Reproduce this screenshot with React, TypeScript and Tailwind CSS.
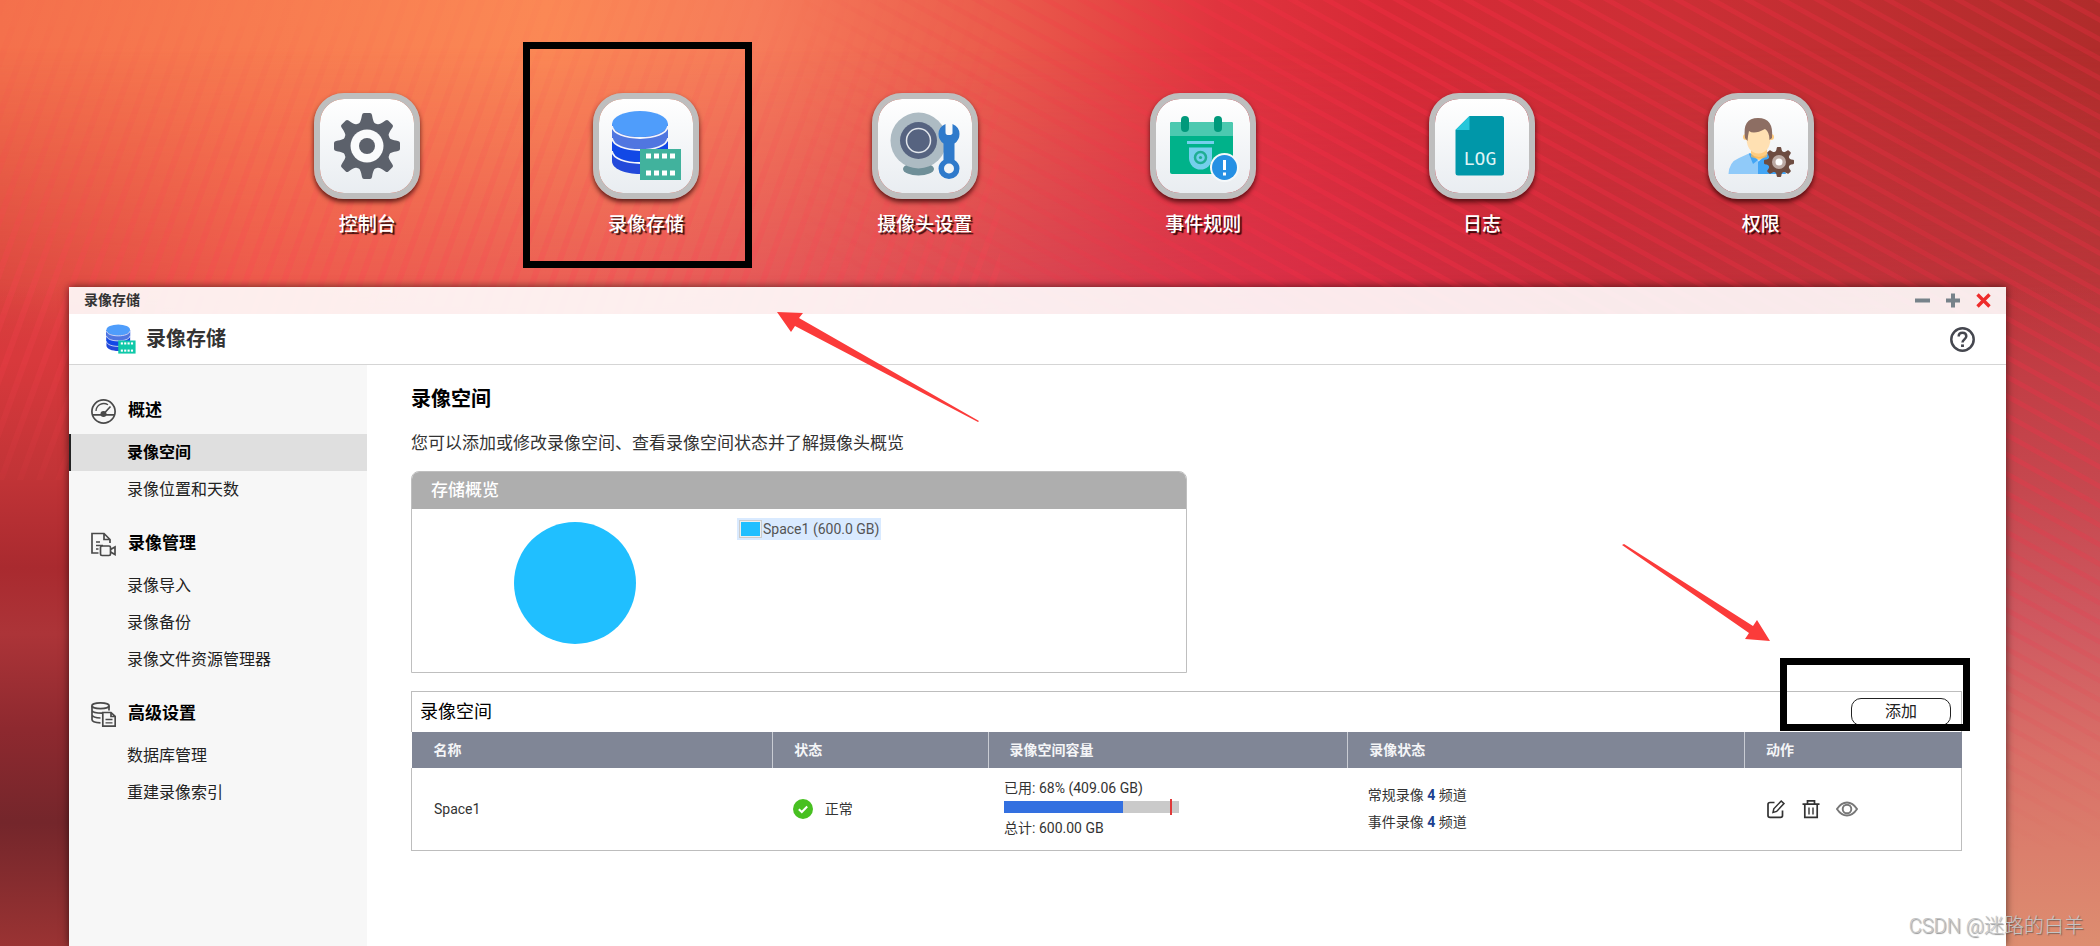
import type { ReactNode } from "react";

const GEAR_ANGLES = [0, 45, 90, 135, 180, 225, 270, 315];

function Gear({ cx, cy, r, fill }: { cx: number; cy: number; r: number; fill: string }) {
  return (
    <g transform={`translate(${cx} ${cy}) scale(${r / 33})`} fill={fill}>
      <circle r="24" />
      {GEAR_ANGLES.map((a) => (
        <path key={a} transform={`rotate(${a})`} d="M-10 -20 C-7 -23 -6 -25 -5 -31 Q-4.600 -33 -3 -33 H3 Q4.600 -33 5 -31 C6 -25 7 -23 10 -20 Z" />
      ))}
    </g>
  );
}

function StorageArt({ film }: { film: string }) {
  return (
    <g>
      <path d="M19 31 V68 C19 76 32 81 47 81 S75 76 75 68 V31 Z" fill="#2349da" />
      <path d="M19 31 V56 C19 64 32 69 47 69 S75 64 75 56 V31 Z" fill="#1248e6" />
      <path d="M19 31 V44 C19 52 32 57 47 57 S75 52 75 44 V31 Z" fill="#5076e0" />
      <ellipse cx="47" cy="31" rx="28" ry="13" fill="#4f9dfb" />
      <g fill="none" stroke="#f3f5fb" strokeWidth="1.800">
        <path d="M19 33 C20 41 33 45 47 45 S74 41 75 33" />
        <path d="M19 45 C20 53 33 57 47 57 S74 53 75 45" />
        <path d="M19 58 C20 66 33 70 47 70 S74 66 75 58" />
      </g>
      <rect x="47" y="56" width="41" height="31" fill={film} />
      {[53, 61, 69, 77].map((x) => (
        <g key={x} fill="#fff">
          <rect x={x} y="60.500" width="5" height="5" />
          <rect x={x} y="77.500" width="5" height="5" />
        </g>
      ))}
    </g>
  );
}

function ControlArt() {
  return (
    <g>
      <Gear cx={53} cy={53} r={33} fill="#5c616b" />
      <circle cx="53" cy="53" r="16.500" fill="#fafbfc" />
      <circle cx="53" cy="53" r="8" fill="#5c616b" />
    </g>
  );
}

function CameraArt() {
  return (
    <g>
      <ellipse cx="46.500" cy="76" rx="15.500" ry="6.500" fill="#6f8f98" />
      <circle cx="46.500" cy="47.500" r="28" fill="#adbbc3" />
      <circle cx="46.500" cy="47.500" r="18.500" fill="#566380" />
      <circle cx="46.500" cy="47.500" r="12" fill="none" stroke="#e3e7ec" strokeWidth="1.500" />
      <path
        fill="#2f7acb"
        d="M73.500 31 V40 Q73.500 42 77 42 Q80.500 42 80.500 40 V31 Q87.500 34 87.500 41 Q87.500 47 82.500 50.500 V67 Q87.500 70 87.500 75.500 A10.500 10.500 0 0 1 66.500 75.500 Q66.500 70 71.500 67 V50.500 Q66.500 47 66.500 41 Q66.500 34 73.500 31 Z"
      />
      <circle cx="77" cy="75.500" r="5" fill="#f1f4f7" />
    </g>
  );
}

function EventArt() {
  return (
    <g>
      <rect x="20" y="29" width="63" height="52" rx="2" fill="#00b28a" />
      <path d="M20 43 V31 Q20 29 22 29 H81 Q83 29 83 31 V43 Z" fill="#4cc9b0" />
      <rect x="31" y="23" width="8" height="16" rx="4" fill="#00997b" />
      <rect x="64" y="23" width="8" height="16" rx="4" fill="#00997b" />
      <rect x="37" y="48" width="27" height="3" fill="#74cfec" />
      <path d="M39 54.500 H62 V65 A11.500 11.500 0 0 1 39 65 Z" fill="#74cfec" />
      <circle cx="50.500" cy="64.500" r="5.500" fill="none" stroke="#1fae94" strokeWidth="2.500" />
      <circle cx="50.500" cy="64.500" r="1.600" fill="#1fae94" />
      <circle cx="74.500" cy="74.500" r="14.500" fill="#f5f8fa" />
      <circle cx="74.500" cy="74.500" r="12.500" fill="#2590e4" />
      <rect x="73" y="67" width="3" height="10" fill="#fff" />
      <rect x="73" y="79.500" width="3" height="3" fill="#fff" />
    </g>
  );
}

function LogArt() {
  return (
    <g>
      <path d="M40.500 23 H72.500 Q75 23 75 25.500 V80 Q75 82.500 72.500 82.500 H29 Q26.500 82.500 26.500 80 V37 Z" fill="#0097a9" />
      <path d="M40.500 23 V37 H26.500 Z" fill="#26c6da" />
      <text x="51" y="72" textAnchor="middle" fill="#dff4f6" fontSize="18" fontFamily="'DejaVu Sans Mono', monospace">
        LOG
      </text>
    </g>
  );
}

function UserArt() {
  return (
    <g>
      <path d="M43 56 H59 V64 Q51 70 43 64 Z" fill="#ffcc80" />
      <path d="M20.500 81 Q21 69 31 65 L42 60 L51 68 L60 60 Q72 64 76 70 V81 Z" fill="#90caf9" />
      <path d="M50 69 L60 61 Q68 63 72 66 L78 81 H50 Z" fill="#42a5f5" />
      <path d="M42 60 L50 67 L45 71 L41 61 Z" fill="#42a5f5" />
      <path d="M43 61 Q51 67 59 61 V64 Q51 67 43 64 Z" fill="#ffb74d" opacity=".7" />
      <circle cx="38" cy="44" r="3" fill="#ffcc80" />
      <circle cx="63" cy="44" r="3" fill="#ffcc80" />
      <path d="M38.500 36 Q38.500 28 50.500 28 T62.500 36 V45 Q62 60 50.500 60.500 Q39 60 38.500 45 Z" fill="#ffe0b2" />
      <path d="M37 45 Q34 25 50 25 Q66 25 64 45 L61.500 47 Q61.500 39 57 36 Q46 42 41 38 Q40 42 39.500 48 Z" fill="#8d6e63" />
      <Gear cx={71} cy={69} r={15} fill="#6d4c41" />
      <circle cx="71" cy="69" r="7" fill="#bcaaa4" />
      <circle cx="71" cy="69" r="3.500" fill="#fff" />
    </g>
  );
}

const SHORTCUTS: { label: string; art: ReactNode; marked?: boolean }[] = [
  { label: "控制台", art: <ControlArt /> },
  { label: "录像存储", art: <StorageArt film="#41b29d" />, marked: true },
  { label: "摄像头设置", art: <CameraArt /> },
  { label: "事件规则", art: <EventArt /> },
  { label: "日志", art: <LogArt /> },
  { label: "权限", art: <UserArt /> },
];

function Wallpaper() {
  return (
    <svg className="absolute inset-0 h-full w-full" viewBox="0 0 2100 946" preserveAspectRatio="none" aria-hidden="true">
      <defs>
        <linearGradient id="base" x1="0" y1="0" x2="1" y2="0">
          <stop offset="0" stopColor="#f4704c" />
          <stop offset=".26" stopColor="#fb8855" />
          <stop offset=".36" stopColor="#f67c5a" />
          <stop offset=".48" stopColor="#ea5a4b" />
          <stop offset=".58" stopColor="#e0343e" />
          <stop offset=".66" stopColor="#d62a36" />
          <stop offset=".8" stopColor="#cb2f35" />
          <stop offset="1" stopColor="#b02c2b" />
        </linearGradient>
        <linearGradient id="low" x1="0" y1="0" x2="1" y2="0">
          <stop offset="0" stopColor="#d2383b" />
          <stop offset=".12" stopColor="#e94c4a" />
          <stop offset=".3" stopColor="#e35058" />
          <stop offset=".5" stopColor="#d33e54" />
          <stop offset=".62" stopColor="#d82e4a" />
          <stop offset=".76" stopColor="#c12c3a" />
          <stop offset="1" stopColor="#bd3a40" />
        </linearGradient>
        <linearGradient id="fadeDown" x1="0" y1="0" x2="0" y2="1">
          <stop offset=".05" stopColor="#fff" stopOpacity="0" />
          <stop offset=".4" stopColor="#fff" stopOpacity="1" />
        </linearGradient>
        <mask id="lowMask">
          <rect width="2100" height="946" fill="url(#fadeDown)" />
        </mask>
        <linearGradient id="leftEdge" x1="0" y1="0" x2="0" y2="1">
          <stop offset=".3" stopColor="#d8393c" stopOpacity="0" />
          <stop offset=".38" stopColor="#d8393c" />
          <stop offset=".5" stopColor="#c23437" />
          <stop offset=".6" stopColor="#a92a2f" />
          <stop offset=".67" stopColor="#ac3438" />
          <stop offset=".77" stopColor="#8e292f" />
          <stop offset=".87" stopColor="#74262b" />
          <stop offset="1" stopColor="#9a3333" />
        </linearGradient>
        <linearGradient id="rightEdge" x1="0" y1="0" x2="0" y2="1">
          <stop offset=".3" stopColor="#bf3a40" stopOpacity="0" />
          <stop offset=".4" stopColor="#c23e45" />
          <stop offset=".52" stopColor="#c6484f" />
          <stop offset=".66" stopColor="#cf5960" />
          <stop offset=".8" stopColor="#d97068" />
          <stop offset="1" stopColor="#dd8d70" />
        </linearGradient>
        <pattern id="steep" width="18" height="18" patternUnits="userSpaceOnUse" patternTransform="rotate(20)">
          <rect width="6" height="18" fill="#ff4452" opacity=".24" />
        </pattern>
        <pattern id="slant" width="20" height="17" patternUnits="userSpaceOnUse" patternTransform="rotate(29)">
          <rect width="20" height="5" fill="#ff3048" opacity=".3" />
        </pattern>
        <linearGradient id="steepFade" x1="0" y1="0" x2="0" y2="1">
          <stop offset=".05" stopColor="#fff" stopOpacity=".1" />
          <stop offset=".6" stopColor="#fff" stopOpacity="1" />
          <stop offset="1" stopColor="#fff" stopOpacity=".3" />
        </linearGradient>
        <linearGradient id="slantFade" x1="0" y1="0" x2="1" y2="0">
          <stop offset=".4" stopColor="#fff" stopOpacity="0" />
          <stop offset=".55" stopColor="#fff" stopOpacity=".5" />
          <stop offset=".7" stopColor="#fff" stopOpacity="1" />
          <stop offset="1" stopColor="#fff" stopOpacity=".7" />
        </linearGradient>
        <linearGradient id="slantDown" x1="0" y1="0" x2="0" y2="1">
          <stop offset=".5" stopColor="#fff" stopOpacity=".8" />
          <stop offset=".9" stopColor="#fff" stopOpacity="0" />
        </linearGradient>
        <mask id="steepMask">
          <rect width="1000" height="480" fill="url(#steepFade)" />
        </mask>
        <mask id="slantMask">
          <rect width="2000" height="946" fill="url(#slantFade)" />
          <rect x="2000" width="100" height="946" fill="url(#slantDown)" />
        </mask>
      </defs>
      <rect width="2100" height="946" fill="url(#base)" />
      <rect width="2100" height="946" fill="url(#low)" mask="url(#lowMask)" />
      <rect width="80" height="946" fill="url(#leftEdge)" />
      <rect x="2000" width="100" height="946" fill="url(#rightEdge)" />
      <rect width="1000" height="946" fill="url(#steep)" mask="url(#steepMask)" />
      <rect width="2100" height="946" fill="url(#slant)" mask="url(#slantMask)" />
    </svg>
  );
}

const iconStroke = { fill: "none", stroke: "#4a4a4a", strokeWidth: 1.7 } as const;

function GaugeIcon() {
  return (
    <svg className="h-[25px] w-[25px]" viewBox="0 0 25 25" {...iconStroke} aria-hidden="true">
      <circle cx="12.500" cy="12.500" r="11.600" />
      <path d="M1.500 15.800 H10 M15 15.800 H23.500 M13 14.500 L19.500 7.500" />
      <path d="M5 12 A7.800 7.800 0 0 1 17 5.800" strokeWidth="1.300" />
      <circle cx="12.500" cy="15" r="2.200" fill="#4a4a4a" />
    </svg>
  );
}

function RecordFileIcon() {
  return (
    <svg className="h-[25px] w-[25px]" viewBox="0 0 25 25" {...iconStroke} aria-hidden="true">
      <path d="M7.500 21 H1 V1.500 H13 L19 7.500 V11 M13 1.500 V7.500 H19" />
      <path d="M5 10 H9 M5 13.500 H12 M5 17 H7.500" strokeWidth="1.400" />
      <rect x="9.500" y="14" width="10" height="9.500" rx="1.500" />
      <path d="M19.500 17.500 L24 15 V22.500 L19.500 20" />
    </svg>
  );
}

function DatabaseFileIcon() {
  return (
    <svg className="h-[25px] w-[25px]" viewBox="0 0 25 25" {...iconStroke} aria-hidden="true">
      <ellipse cx="9.500" cy="3.800" rx="8.600" ry="2.900" />
      <path d="M1 4 V17.500 Q1 20.500 9.500 20.800 M18 4 V8.500 M1 8.500 Q2 11.200 11 11.200 M1 13 Q2 15.800 9.500 16" />
      <path d="M11.800 10.500 H20 L24.200 14.500 V24.200 H11.800 Z M20 10.500 V14.500 H24" />
      <path d="M14.500 17.500 H21.500 M14.500 20.800 H21.500" strokeWidth="1.300" />
    </svg>
  );
}

const MENU: { title: string; icon: ReactNode; items: string[] }[] = [
  { title: "概述", icon: <GaugeIcon />, items: ["录像空间", "录像位置和天数"] },
  { title: "录像管理", icon: <RecordFileIcon />, items: ["录像导入", "录像备份", "录像文件资源管理器"] },
  { title: "高级设置", icon: <DatabaseFileIcon />, items: ["数据库管理", "重建录像索引"] },
];

function Sidebar() {
  return (
    <nav className="w-[298px] shrink-0 bg-[#f7f7f7] pt-[23px]" aria-label="录像存储">
      {MENU.map((group, g) => (
        <section key={group.title} className="mb-[13px]">
          <h2 className="flex h-[46px] items-center gap-3 pl-[22px] text-[17px] font-bold text-black">
            {group.icon}
            {group.title}
          </h2>
          <ul>
            {group.items.map((item, i) => {
              const active = g === 0 && i === 0;
              return (
                <li key={item}>
                  <a
                    href="#"
                    aria-current={active ? "page" : undefined}
                    className={
                      active
                        ? "flex h-[37px] items-center border-l-2 border-[#222] bg-[#dfdfdf] pl-14 text-base font-bold text-black"
                        : "flex h-[37px] items-center pl-[58px] text-base text-[#222]"
                    }
                  >
                    {item}
                  </a>
                </li>
              );
            })}
          </ul>
        </section>
      ))}
    </nav>
  );
}

function Overview() {
  return (
    <section className="mt-4 h-[202px] w-1/2 overflow-hidden rounded-t-lg border border-[#bfbfbf]">
      <h2 className="flex h-[37px] items-center bg-[#aeaeae] pl-[19px] text-[17px] font-medium text-white">存储概览</h2>
      <div className="flex items-start gap-[101px] pl-[102px]">
        <svg className="mt-[13px] h-[122px] w-[122px]" viewBox="0 0 122 122" role="img" aria-label="Space1">
          <circle cx="61" cy="61" r="61" fill="#20bfff" />
        </svg>
        <div className="mt-[9px] flex h-[22px] items-center gap-px bg-[#d9eaff] px-[2px] text-sm text-[#545454]">
          <span className="h-[18px] w-[23px] border border-[#ccc] bg-[#20bfff] p-px outline-1 -outline-offset-2 outline-[#eee]" />
          <span>Space1 (600.0 GB)</span>
        </div>
      </div>
    </section>
  );
}

function SpaceTable() {
  const th = "border-l border-[#c9ccd3] pl-[21px] text-left font-bold";
  return (
    <section className="mt-[18px]">
      <div className="relative flex h-[41px] items-center justify-between border border-b-0 border-[#bdbdbd] pr-[10px] pb-px pl-2">
        <h2 className="text-lg text-black">录像空间</h2>
        <button type="button" className="h-[28px] w-[100px] rounded-[10px] border border-[#222] bg-white text-base text-[#222]">
          添加
        </button>
        <span className="pointer-events-none absolute -top-[34px] -right-[9px] h-[73px] w-[190px] border-[7px] border-black" aria-hidden="true" />
      </div>
      <table className="w-full table-fixed border-collapse text-sm text-[#333]">
        <colgroup>
          <col className="w-[23.3%]" />
          <col className="w-[13.9%]" />
          <col className="w-[23.2%]" />
          <col className="w-[25.6%]" />
          <col />
        </colgroup>
        <thead>
          <tr className="h-9 bg-[#808696] text-[#f4f5f7]">
            <th className="pl-[22px] text-left font-bold">名称</th>
            <th className={th}>状态</th>
            <th className={th}>录像空间容量</th>
            <th className={th}>录像状态</th>
            <th className={th}>动作</th>
          </tr>
        </thead>
        <tbody>
          <tr className="h-[82px] border border-t-0 border-[#bdbdbd]">
            <td className="pl-[22px]">Space1</td>
            <td className="pl-5">
              <div className="flex items-center gap-3">
                <svg className="h-5 w-5" viewBox="0 0 20 20" aria-hidden="true">
                  <circle cx="10" cy="10" r="10" fill="#48c021" />
                  <path d="M5.800 10.200 L8.800 13 L14.200 7.500" fill="none" stroke="#fff" strokeWidth="2" />
                </svg>
                正常
              </div>
            </td>
            <td className="pl-4">
              <div className="flex h-[26px] items-center">已用: 68% (409.06 GB)</div>
              <div className="relative h-3 w-[175px] bg-[#cacaca]" role="meter" aria-valuenow={68} aria-label="录像空间容量">
                <div className="h-full bg-[#3370e0]" style={{ width: "68%" }} />
                <span className="absolute -top-[2px] right-[7px] h-4 w-[2px] bg-[#e03a3a]" />
              </div>
              <div className="flex h-[30px] items-center">总计: 600.00 GB</div>
            </td>
            <td className="pl-5">
              <p className="leading-[27px]">
                常规录像 <b className="text-[#1c3f8f]">4</b> 频道
              </p>
              <p className="leading-[27px]">
                事件录像 <b className="text-[#1c3f8f]">4</b> 频道
              </p>
            </td>
            <td className="pl-[22px]">
              <div className="flex items-center gap-4">
                <button type="button" aria-label="编辑">
                  <svg className="h-5 w-5" viewBox="0 0 20 20" fill="none" stroke="#333" strokeWidth="1.700" aria-hidden="true">
                    <path d="M8.500 3.500 H4 Q2 3.500 2 5.500 V16.500 Q2 18.300 4 18.300 H14.500 Q16.500 18.300 16.500 16.500 V11.500" />
                    <path d="M7 13.500 L7.800 9.800 L15.200 2 L18 4.600 L10.600 12.400 Z" strokeWidth="1.500" />
                  </svg>
                </button>
                <button type="button" aria-label="删除">
                  <svg className="h-5 w-[18px]" viewBox="0 0 18 20" fill="none" stroke="#333" strokeWidth="1.700" aria-hidden="true">
                    <path d="M0.500 5.200 H17.500 M5.500 5 V1.800 H12.500 V5 M2.800 5.500 V18.300 H15.200 V5.500" />
                    <path d="M7 8.500 V15.500 M11 8.500 V15.500" strokeWidth="1.400" />
                  </svg>
                </button>
                <button type="button" aria-label="查看">
                  <svg className="h-5 w-[22px]" viewBox="0 0 23 20" fill="none" stroke="#777" strokeWidth="2" aria-hidden="true">
                    <path d="M1 10 Q5.500 3.200 11.500 3.200 T22 10 Q17.500 16.800 11.500 16.800 T1 10 Z" />
                    <circle cx="11.500" cy="10" r="4.500" />
                  </svg>
                </button>
              </div>
            </td>
          </tr>
        </tbody>
      </table>
    </section>
  );
}

function TitleBar() {
  return (
    <div className="flex h-[27px] items-center justify-between bg-white/90 pr-[15px] pb-px pl-[15px]">
      <span className="text-sm font-bold text-[#333]">录像存储</span>
      <div className="flex gap-4">
        <button type="button" aria-label="最小化">
          <svg className="h-[15px] w-[15px]" viewBox="0 0 15 15" aria-hidden="true">
            <path d="M0 7.500 H15" stroke="#77828a" strokeWidth="4" />
          </svg>
        </button>
        <button type="button" aria-label="最大化">
          <svg className="h-[15px] w-[14px]" viewBox="0 0 14 15" aria-hidden="true">
            <path d="M0 7.500 H14 M7 0.500 V14.500" stroke="#77828a" strokeWidth="4" />
          </svg>
        </button>
        <button type="button" aria-label="关闭">
          <svg className="h-[15px] w-[15px]" viewBox="0 0 15 15" aria-hidden="true">
            <path d="M1.500 1.500 L13.500 13.500 M13.500 1.500 L1.500 13.500" stroke="#ee2b2b" strokeWidth="3.400" />
          </svg>
        </button>
      </div>
    </div>
  );
}

export default function App() {
  return (
    <div className="relative flex min-h-screen flex-col overflow-hidden font-['Roboto','Noto_Sans_CJK_SC',sans-serif]" lang="zh-CN">
      <Wallpaper />

      <div className="relative grid grid-cols-6 pt-[93px] pr-[200px] pb-12 pl-[228px]">
        {SHORTCUTS.map((s) => (
          <div key={s.label} className="relative flex justify-center">
            <a href="#" className="flex flex-col items-center gap-3">
              <span className="relative h-[106px] w-[106px] rounded-[30px] border-[6px] border-[#bebebe] bg-linear-to-b from-white to-[#e9edf1] bg-clip-padding shadow-[0_3px_5px_rgba(40,0,0,0.75)]">
                <svg className="absolute -inset-[6px] h-[106px] w-[106px]" viewBox="0 0 106 106" aria-hidden="true">
                  {s.art}
                </svg>
              </span>
              <span className="text-[19px] leading-7 font-medium text-white [text-shadow:2px_2px_1px_rgba(30,0,0,0.85)]">{s.label}</span>
            </a>
            {s.marked && <span className="pointer-events-none absolute -top-[51px] left-4 h-[226px] w-[229px] border-[7px] border-black" aria-hidden="true" />}
          </div>
        ))}
      </div>

      <div className="relative mr-[94px] ml-[69px] flex grow flex-col shadow-[0_0_8px_rgba(0,0,0,0.6)]">
        <TitleBar />
        <header className="flex h-[51px] items-center justify-between border-b border-[#d5d5d5] bg-white pr-[31px] pl-[37px]">
          <div className="flex items-center gap-[10px]">
            <svg className="h-[30px] w-[30px]" viewBox="18 17 71 71" aria-hidden="true">
              <StorageArt film="#0fc9a9" />
            </svg>
            <h1 className="text-xl leading-7 font-bold text-[#333]">录像存储</h1>
          </div>
          <button type="button" aria-label="帮助">
            <svg className="h-[25px] w-[25px]" viewBox="0 0 25 25" fill="none" stroke="#45474f" aria-hidden="true">
              <circle cx="12.500" cy="12.500" r="11.200" strokeWidth="2.500" />
              <path d="M8.700 9.500 Q8.700 5.800 12.500 5.800 T16.300 9.300 Q16.300 11 14.300 12.400 Q12.500 13.700 12.500 15.600" strokeWidth="2.500" />
              <path d="M12.500 17.400 V20" strokeWidth="2.900" />
            </svg>
          </button>
        </header>

        <div className="flex grow bg-white">
          <Sidebar />
          <main className="grow px-11 pt-5">
            <h2 className="text-xl leading-7 font-bold text-black">录像空间</h2>
            <p className="mt-[18px] text-[17px] leading-6 text-[#333]">您可以添加或修改录像空间、查看录像空间状态并了解摄像头概览</p>
            <Overview />
            <SpaceTable />
          </main>
        </div>
      </div>

      <svg className="pointer-events-none absolute top-0 left-0 h-[946px] w-[2100px]" viewBox="0 0 2100 946" fill="#fb3b3a" aria-hidden="true">
        <path d="M777 312 L803 313 L799 318 L979 421 L978 422 L795 326 L791 332 Z" />
        <path d="M1622 545 L1624 544 L1753 626 L1757 620 L1770 641 L1745 639 L1749 633 Z" />
      </svg>

      <p className="absolute right-4 bottom-2 text-xl leading-6 font-light text-[#c4c4c4] [text-shadow:1px_1px_1px_rgba(70,70,70,0.6)]">CSDN @迷路的白羊</p>
    </div>
  );
}
